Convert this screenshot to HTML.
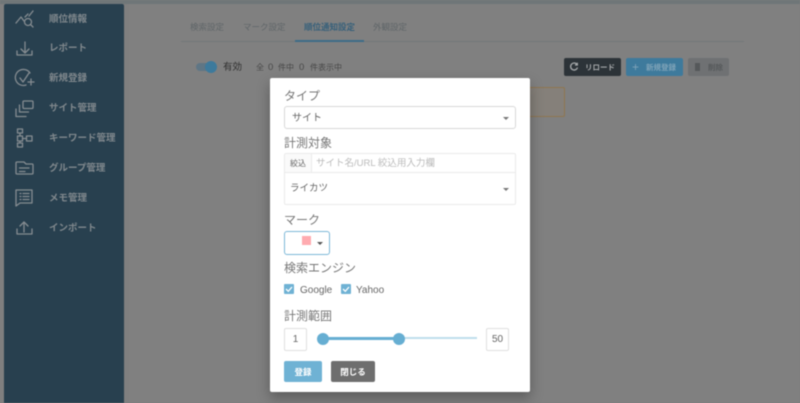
<!DOCTYPE html>
<html lang="ja"><head><meta charset="utf-8"><style>
*{box-sizing:border-box}
html,body{margin:0;padding:0}
body{width:800px;height:403px;overflow:hidden;position:relative;background:#7f7f7f;font-family:"Liberation Sans","Noto Sans CJK JP",sans-serif;filter:blur(.4px)}
.a{position:absolute;white-space:nowrap}
#side{position:absolute;left:4px;top:4px;width:120px;height:399px;background:#28404f;border-radius:2px 2px 0 0}
.m{position:absolute;left:49px;font-size:9.5px;font-weight:700;color:#80888d;line-height:12px;white-space:nowrap}
#ic{position:absolute;left:0;top:0;fill:none;stroke:#858c91;stroke-width:1.3;stroke-linecap:round;stroke-linejoin:round}
#main{position:absolute;left:128px;top:4px;width:672px;height:399px;background:#808080}
#top{position:absolute;left:0;top:0;width:800px;height:4px;background:#6f7678}
.tab{position:absolute;top:21px;font-size:8.5px;color:#5f6568;line-height:12px;white-space:nowrap}
.btn{position:absolute;top:58px;height:18px;border-radius:2px;font-size:7.5px;font-weight:700;line-height:19px;white-space:nowrap}
#modal{position:absolute;left:270px;top:78px;width:260px;height:314px;background:#fff;border-radius:2px;box-shadow:0 6px 14px rgba(0,0,0,.3)}
.lab{position:absolute;left:14px;font-size:12px;line-height:16px;color:#777;white-space:nowrap}
.box{position:absolute;background:#fff;border:1px solid #e0e0e0;border-radius:2px}
.car{position:absolute;width:0;height:0;border-left:3px solid transparent;border-right:3px solid transparent;border-top:3px solid #777}
.cb{position:absolute;top:206px;width:10px;height:10px;background:#6fb2d4;border-radius:1px}
.cbt{position:absolute;top:207px;font-size:10px;line-height:12px;color:#666}
</style></head><body>
<div id="main"></div><div id="top"></div>
<div id="side"></div>

<svg id="ic" width="130" height="403" viewBox="0 0 130 403">
<path d="M16 23l5-6 3 4M25 17l3-3M29 16l4-5"/><circle cx="28" cy="22" r="3.500"/><path d="M30.500 24.500l2.500 2.500"/>
<path d="M25 42v11M21 49l4 4 4-4M17 51v4h15v-4"/>
<path d="M30 73a8 8 0 1 0-4 12M20 78l3 4 6-9M31 79v6M28 82h6"/>
<rect x="23" y="101" width="10" height="7.500" rx="1"/><path d="M19.500 105v7h9M16 109v7.500h10"/>
<rect x="17.500" y="129" width="5" height="4"/><rect x="17.500" y="136" width="5" height="5"/><rect x="17.500" y="143" width="5" height="4"/><rect x="26.500" y="136" width="5.500" height="5"/><path d="M20 133v3M20 141v2M22.500 138.500h4"/>
<path d="M16 163a1 1 0 0 1 1-1h7l2 2h6a1 1 0 0 1 1 1v8a1 1 0 0 1-1 1H17a1 1 0 0 1-1-1zM19.500 168h9.500M19.500 171.500h5.500"/>
<path d="M16 190h16v13H20l-4 3zM20 193.500h1M23 193.500h6M20 196.500h1M23 196.500h6M20 199.500h1M23 199.500h6"/>
<path d="M24 222v10M20 226l4-4 4 4M17 229v5h15v-5"/>
</svg>
<div class="m" style="top:14px">順位情報</div>
<div class="m" style="top:43px">レポート</div>
<div class="m" style="top:73px">新規登録</div>
<div class="m" style="top:103px">サイト管理</div>
<div class="m" style="top:133px">キーワード管理</div>
<div class="m" style="top:163px">グループ管理</div>
<div class="m" style="top:193px">メモ管理</div>
<div class="m" style="top:223px">インポート</div>

<div class="tab" style="left:190px">検索設定</div>
<div class="tab" style="left:243px">マーク設定</div>
<div class="tab" style="left:304px;color:#37607a;font-weight:700">順位通知設定</div>
<div class="tab" style="left:373px">外観設定</div>
<div class="a" style="left:181px;top:41px;width:563px;height:1px;background:#72787a"></div>
<div class="a" style="left:295px;top:40px;width:69px;height:2px;background:#3d6c88"></div>

<div class="a" style="left:196px;top:63px;width:16px;height:8px;border-radius:4px;background:#5f7685"></div>
<div class="a" style="left:205px;top:61px;width:12px;height:12px;border-radius:50%;background:#3d7a9c"></div>
<div class="a" style="left:223px;top:61px;font-size:9.500px;line-height:14px;color:#2f2f2f">有効</div>
<div class="a" style="left:256px;top:61px;font-size:8px;line-height:14px;color:#484848">全</div>
<div class="a" style="left:268px;top:61px;font-size:9.500px;line-height:14px;color:#484848">0</div>
<div class="a" style="left:278px;top:61px;font-size:8px;line-height:14px;color:#484848">件中</div>
<div class="a" style="left:299px;top:61px;font-size:9.500px;line-height:14px;color:#484848">0</div>
<div class="a" style="left:310px;top:61px;font-size:8px;line-height:14px;color:#484848">件表示中</div>

<div class="btn" style="left:564px;width:57px;background:#2c3338;color:#a5a8aa;padding-left:21px">リロード</div>
<svg class="a" style="left:569px;top:62px" width="10" height="10" viewBox="0 0 10 10" fill="none" stroke="#a5a8aa" stroke-width="1.300"><path d="M8 2.500A3.500 3.500 0 1 0 8.500 5.500M8.300 .8v2.200H6"/></svg>
<div class="btn" style="left:626px;width:57px;background:#3e7a9c;color:#7fa3b8;padding-left:20px">新規登録</div>
<div class="a" style="left:632px;top:60px;font-size:12px;line-height:14px;color:#7fa3b8">+</div>
<div class="btn" style="left:688px;width:41px;background:#6f7173;color:#55585a;padding-left:20px">削除</div>
<div class="a" style="left:695px;top:63px;width:5px;height:8px;background:#55585a"></div>
<div class="a" style="left:520px;top:87px;width:45px;height:30px;background:#85807a;border:1px solid #8f7550;border-radius:2px"></div>

<div id="modal">
<div class="lab" style="top:10px">タイプ</div>
<div class="box" style="left:14px;top:28px;width:232px;height:23px;border-radius:3px;border-color:#d8d8d8"></div>
<div class="a" style="left:22px;top:34px;font-size:10px;line-height:14px;color:#666">サイト</div>
<div class="car" style="left:233px;top:39px"></div>

<div class="lab" style="top:57px">計測対象</div>
<div class="box" style="left:14px;top:75px;width:232px;height:52px;border-color:#ebebeb"></div>
<div class="a" style="left:14px;top:94px;width:232px;height:1px;background:#ebebeb"></div>
<div class="a" style="left:41px;top:76px;width:1px;height:18px;background:#ebebeb"></div>
<div class="a" style="left:15px;top:76px;width:26px;height:18px;background:#fafafa"></div>
<div class="a" style="left:20px;top:80px;font-size:8px;line-height:12px;color:#666">絞込</div>
<div class="a" style="left:46px;top:79px;font-size:9.500px;line-height:14px;color:#bbb">サイト名/URL 絞込用入力欄</div>
<div class="a" style="left:20px;top:104px;font-size:9.500px;line-height:14px;color:#666">ライカツ</div>
<div class="car" style="left:233px;top:110px"></div>

<div class="lab" style="top:134px">マーク</div>
<div class="box" style="left:14px;top:153px;width:46px;height:24px;border:1px solid #7db8d8;border-radius:3px"></div>
<div class="a" style="left:32px;top:158px;width:9px;height:9px;background:#ffabb0"></div>
<div class="car" style="left:47px;top:164px;border-top-color:#555"></div>

<div class="lab" style="top:182px">検索エンジン</div>
<div class="cb" style="left:14px"></div>
<svg class="a" style="left:14px;top:206px" width="10" height="10" viewBox="0 0 10 10" fill="none" stroke="#fff" stroke-width="1.300"><path d="M2 5l2.300 2.300L8 3"/></svg>
<div class="cbt" style="left:30px">Google</div>
<div class="cb" style="left:71px"></div>
<svg class="a" style="left:71px;top:206px" width="10" height="10" viewBox="0 0 10 10" fill="none" stroke="#fff" stroke-width="1.300"><path d="M2 5l2.300 2.300L8 3"/></svg>
<div class="cbt" style="left:86px">Yahoo</div>

<div class="lab" style="top:230px">計測範囲</div>
<div class="box" style="left:14px;top:250px;width:23px;height:23px;text-align:center;font-size:10px;line-height:21px;color:#666">1</div>
<div class="a" style="left:52px;top:259px;width:155px;height:2px;background:#bfdeec"></div>
<div class="a" style="left:52px;top:259px;width:77px;height:3px;background:#66aed2"></div>
<div class="a" style="left:47px;top:255px;width:12px;height:12px;border-radius:50%;background:#66aed2"></div>
<div class="a" style="left:123px;top:255px;width:12px;height:12px;border-radius:50%;background:#66aed2"></div>
<div class="box" style="left:216px;top:250px;width:23px;height:23px;text-align:center;font-size:10px;line-height:21px;color:#666">50</div>

<div class="a" style="left:14px;top:283px;width:38px;height:21px;background:#6fb2d4;border-radius:2px;color:#fff;font-size:8.500px;font-weight:700;line-height:22px;text-align:center">登録</div>
<div class="a" style="left:61px;top:283px;width:44px;height:21px;background:#6e6e6e;border-radius:2px;color:#fff;font-size:8.500px;font-weight:700;line-height:22px;text-align:center">閉じる</div>
</div>
</body></html>
